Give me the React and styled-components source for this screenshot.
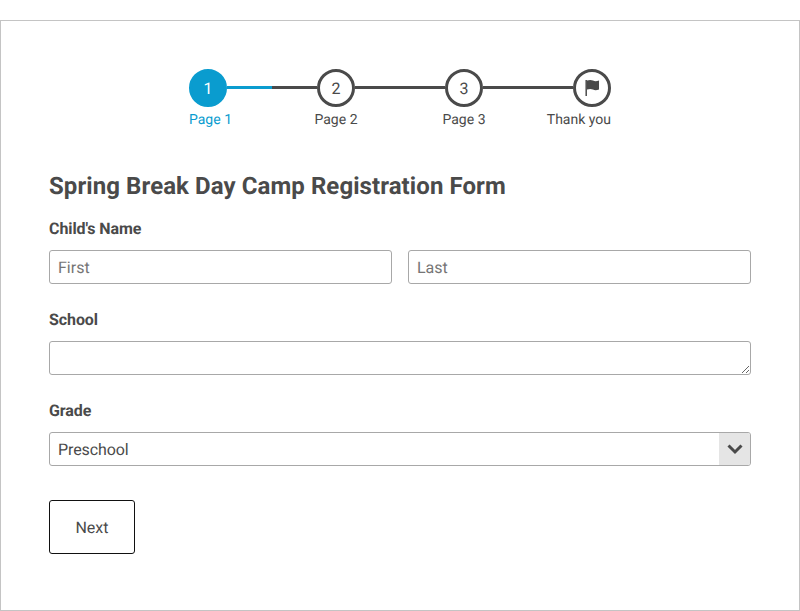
import React from "react";
import styled, { createGlobalStyle } from "styled-components";

const Global = createGlobalStyle`
  html, body { margin: 0; padding: 0; background: #fff; }
  body {
    font-family: Roboto, "Liberation Sans", sans-serif;
    color: #4a4a4a;
    text-rendering: geometricPrecision;
  }
  * { box-sizing: border-box; }
`;

const Frame = styled.form`
  margin-top: 20px;
  height: 591px;
  border: 1px solid #c4c4c4;
  padding: 48px 48px 0;
`;

const Stepper = styled.div`
  display: flex;
  width: 422px;
  margin: 0 auto 41px;
`;

const Step = styled.div`
  display: flex;
  flex-direction: column;
  width: 38px;
  align-items: ${(p) => p.$align};
`;

const Circle = styled.div`
  width: 38px;
  height: 38px;
  flex: none;
  border-radius: 50%;
  border: 3px solid ${(p) => (p.$active ? "#0a9ccf" : "#4a4a4a")};
  background: ${(p) => (p.$active ? "#0a9ccf" : "#fff")};
  color: ${(p) => (p.$active ? "#fff" : "#4a4a4a")};
  display: flex;
  align-items: center;
  justify-content: center;
  font-size: 16px;
`;

const StepLabel = styled.div`
  margin-top: 4px;
  font-size: 14px;
  line-height: 18px;
  white-space: nowrap;
  color: ${(p) => (p.$active ? "#0a9ccf" : "#4a4a4a")};
`;

const Connector = styled.div`
  flex: 1;
  height: 3px;
  margin-top: 17px;
  background: #4a4a4a;
`;

const ConnectorFill = styled.div`
  width: 50%;
  height: 100%;
  background: #0a9ccf;
`;

const Title = styled.h1`
  margin: 0 0 17px;
  font-size: 24px;
  line-height: 32px;
  font-weight: 700;
  letter-spacing: 0.08px;
  color: #4a4a4a;
`;

const Field = styled.div`
  margin-bottom: 26px;
`;

const Label = styled.label`
  display: block;
  font-size: 16px;
  line-height: 20px;
  font-weight: 700;
  letter-spacing: -0.08px;
  margin-bottom: 11px;
`;

const Row = styled.div`
  display: flex;
  gap: 16px;
`;

const controlBase = `
  display: block;
  width: 100%;
  height: 34px;
  border: 1px solid #a8a8a8;
  border-radius: 3px;
  padding: 0 8px;
  font-family: Roboto, "Liberation Sans", sans-serif;
  font-size: 16px;
  color: #4a4a4a;
  background: #fff;
  outline: none;
  text-rendering: geometricPrecision;
`;

const Input = styled.input`
  ${controlBase}
  flex: 1;
  min-width: 0;
  &::placeholder { color: #757575; opacity: 1; }
`;

const Textarea = styled.textarea`
  ${controlBase}
  resize: vertical;
  padding: 6px 8px;
  margin: 0;
`;

const SelectWrap = styled.div`
  position: relative;
`;

const Select = styled.select`
  ${controlBase}
  appearance: none;
  letter-spacing: -0.1px;
`;

const SelectArrow = styled.div`
  position: absolute;
  top: 1px;
  right: 1px;
  bottom: 1px;
  width: 31px;
  background: #e5e5e5;
  border-radius: 0 2px 2px 0;
  display: flex;
  align-items: center;
  justify-content: center;
  pointer-events: none;
`;

const NextButton = styled.button`
  display: block;
  width: 86px;
  height: 54px;
  margin-top: 34px;
  border: 1px solid #111;
  border-radius: 3px;
  background: #fff;
  color: #4a4a4a;
  font-family: Roboto, "Liberation Sans", sans-serif;
  font-size: 16px;
  text-rendering: geometricPrecision;
`;

const FlagIcon = () => (
  <svg width="16" height="18" viewBox="0 0 16 18" aria-hidden="true">
    <path d="M2.200 1v16" stroke="#4a4a4a" strokeWidth="1.5" fill="none" />
    <path d="M3 1.600c2.500-1 4.400-.8 6 0s3.400.8 6 0v9c-2.600.8-4.400.8-6 0s-3.500-1-6 0z" fill="#4a4a4a" />
  </svg>
);

const Chevron = () => (
  <svg width="16" height="12" viewBox="0 0 16 12" aria-hidden="true">
    <path d="M1.500 2.500L8 9l6.500-6.500" stroke="#4a4a4a" strokeWidth="3" fill="none" />
  </svg>
);

export default function App() {
  return (
    <>
      <Global />
      <Frame>
        <Stepper>
          <Step $align="flex-start">
            <Circle $active>1</Circle>
            <StepLabel $active>Page 1</StepLabel>
          </Step>
          <Connector>
            <ConnectorFill />
          </Connector>
          <Step $align="center">
            <Circle>2</Circle>
            <StepLabel>Page 2</StepLabel>
          </Step>
          <Connector />
          <Step $align="center">
            <Circle>3</Circle>
            <StepLabel>Page 3</StepLabel>
          </Step>
          <Connector />
          <Step $align="flex-end">
            <Circle>
              <FlagIcon />
            </Circle>
            <StepLabel>Thank you</StepLabel>
          </Step>
        </Stepper>

        <Title>Spring Break Day Camp Registration Form</Title>

        <Field>
          <Label>Child's Name</Label>
          <Row>
            <Input placeholder="First" />
            <Input placeholder="Last" />
          </Row>
        </Field>

        <Field>
          <Label>School</Label>
          <Textarea />
        </Field>

        <Field>
          <Label>Grade</Label>
          <SelectWrap>
            <Select defaultValue="Preschool">
              <option>Preschool</option>
            </Select>
            <SelectArrow>
              <Chevron />
            </SelectArrow>
          </SelectWrap>
        </Field>

        <NextButton type="button">Next</NextButton>
      </Frame>
    </>
  );
}
